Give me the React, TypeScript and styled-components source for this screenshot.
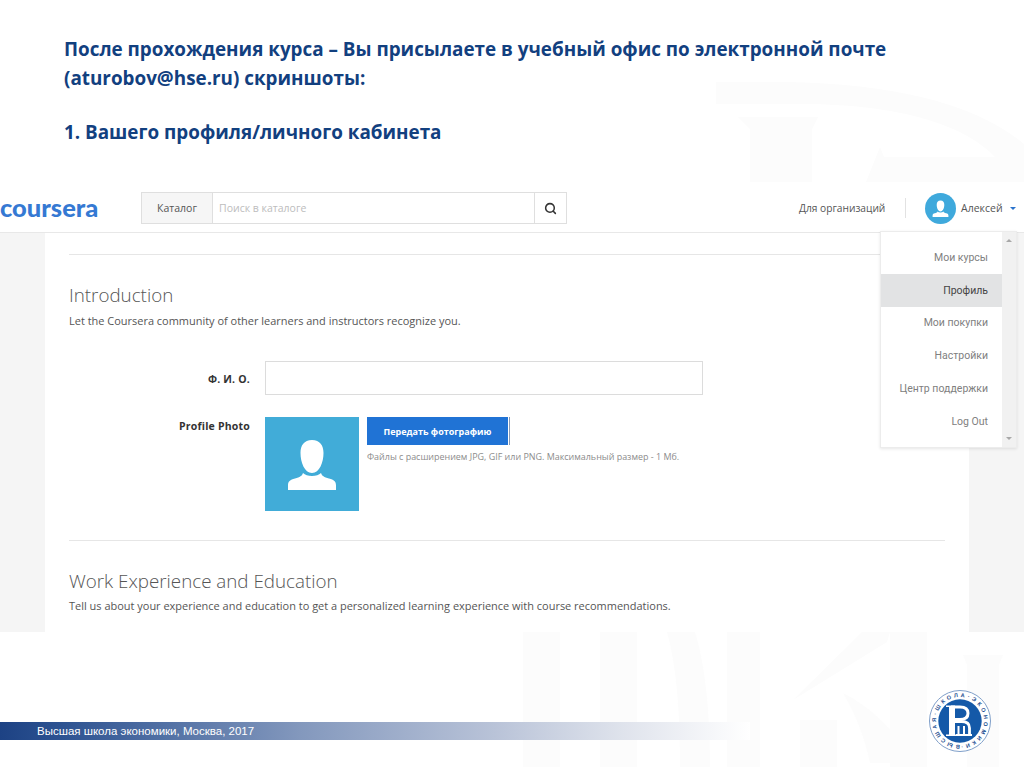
import styled, { createGlobalStyle } from "styled-components"
import { Search } from "lucide-react"

const GlobalStyle = createGlobalStyle`
  html, body {
    margin: 0;
    padding: 0;
    background: #fff;
  }
  * {
    box-sizing: border-box;
  }
`

const Slide = styled.div`
  position: relative;
  width: 1024px;
  height: 767px;
  overflow: hidden;
  display: flex;
  flex-direction: column;
  background: #fff;
  font-family: "Open Sans", "Liberation Sans", sans-serif;
`

const Watermark = styled.svg`
  position: absolute;
  top: 0;
  left: 0;
  width: 1024px;
  height: 767px;
`

const TitleBlock = styled.header`
  position: relative;
  height: 183px;
  padding: 35px 0 0 64px;
  color: #12407f;
  font-size: 18.85px;
  font-weight: 700;
  line-height: 29px;
  white-space: nowrap;
`

const TitleGap = styled.div`
  margin-top: 25px;
`

const Shot = styled.section`
  position: relative;
  height: 449px;
  display: flex;
  flex-direction: column;
  background: #f5f5f5;
`

const TopBar = styled.div`
  height: 50px;
  flex: none;
  display: flex;
  align-items: center;
  padding-top: 1px;
  background: #fff;
  border-bottom: 1px solid #e8e8e8;
`

const Logo = styled.div`
  width: 141px;
  padding-bottom: 3px;
  color: #3579d3;
  font-family: "Lato", sans-serif;
  font-size: 25.5px;
  font-weight: 900;
`

const SearchBox = styled.div`
  width: 426px;
  height: 32px;
  display: flex;
  border: 1px solid #dfdfdf;
  background: #fff;
`

const CatalogTab = styled.div`
  width: 71px;
  display: flex;
  align-items: center;
  justify-content: center;
  background: #f6f6f6;
  border-right: 1px solid #dfdfdf;
  color: #555;
  font-size: 10.5px;
`

const SearchHint = styled.div`
  flex: 1;
  display: flex;
  align-items: center;
  padding-left: 6px;
  color: #bdbdbd;
  font-size: 10.5px;
`

const SearchButton = styled.div`
  width: 32px;
  display: flex;
  align-items: center;
  justify-content: center;
  border-left: 1px solid #dfdfdf;
  color: #333;
`

const TopLink = styled.div`
  margin-left: 232px;
  width: 106px;
  color: #555;
  font-size: 10.2px;
  white-space: nowrap;
`

const Divider = styled.div`
  width: 1px;
  height: 20px;
  background: #e2e2e2;
`

const Avatar = styled.div`
  width: 31px;
  height: 31px;
  margin-left: 19px;
  border-radius: 50%;
  background: #3fa9dc;
  overflow: hidden;
`

const UserName = styled.div`
  margin-left: 5px;
  color: #555;
  font-size: 10.5px;
`

const Caret = styled.div`
  margin-left: 7px;
  width: 0;
  height: 0;
  border-left: 3px solid transparent;
  border-right: 3px solid transparent;
  border-top: 3px solid #2a73cc;
`

const Body = styled.div`
  flex: 1;
  min-height: 0;
  overflow: hidden;
  display: flex;
  padding-left: 45px;
`

const Card = styled.div`
  width: 924px;
  height: 100%;
  padding: 21px 24px 0;
  background: #fff;
`

const Rule = styled.div<{ $top?: number }>`
  height: 1px;
  margin-top: ${(p) => p.$top ?? 0}px;
  background: #e6e6e6;
`

const Heading = styled.h2<{ $top: number }>`
  margin: ${(p) => p.$top}px 0 0;
  color: #555;
  font-size: 18.8px;
  font-weight: 300;
  line-height: 26px;
`

const Lead = styled.p<{ $top: number }>`
  margin: ${(p) => p.$top}px 0 0;
  color: #555;
  font-size: 10.97px;
  line-height: 16px;
  white-space: nowrap;
`

const FormRow = styled.div<{ $top: number }>`
  display: flex;
  gap: 15px;
  margin-top: ${(p) => p.$top}px;
`

const Label = styled.label<{ $center?: boolean }>`
  width: 181px;
  flex: none;
  display: flex;
  justify-content: flex-end;
  align-items: ${(p) => (p.$center ? "center" : "flex-start")};
  padding-top: 2px;
  color: #333;
  font-size: 10.5px;
  font-weight: 700;
  letter-spacing: 0.2px;
`

const NameInput = styled.div`
  width: 438px;
  height: 34px;
  border: 1px solid #dcdcdc;
  background: #fff;
`

const PhotoBox = styled.div`
  width: 94px;
  height: 94px;
  flex: none;
  background: #41acd8;
`

const UploadColumn = styled.div`
  display: flex;
  flex-direction: column;
  margin-left: -7px;
`

const UploadButton = styled.div`
  width: 141px;
  height: 28px;
  display: flex;
  align-items: center;
  justify-content: center;
  background: #2073d5;
  box-shadow: 1px 0 0 #fff, 2px 0 0 #8a9bb5;
  color: #fff;
  font-size: 9px;
  font-weight: 700;
`

const Hint = styled.div`
  margin-top: 6px;
  color: #8c8c8c;
  font-size: 8.95px;
  line-height: 12px;
  white-space: nowrap;
`

const Menu = styled.div`
  position: absolute;
  top: 48px;
  left: 880px;
  width: 137px;
  height: 217px;
  display: flex;
  background: #fff;
  border: 1px solid #ececec;
  box-shadow: 0 1px 3px rgba(0, 0, 0, 0.1);
`

const MenuList = styled.div`
  width: 121px;
  padding-top: 9px;
`

const MenuItem = styled.div<{ $active?: boolean }>`
  height: 32.8px;
  display: flex;
  align-items: center;
  justify-content: flex-end;
  padding-right: 14px;
  background: ${(p) => (p.$active ? "#e2e3e4" : "transparent")};
  color: ${(p) => (p.$active ? "#444" : "#808080")};
  font-family: "Roboto", sans-serif;
  font-size: 10.5px;
`

const ScrollTrack = styled.div`
  flex: 1;
  display: flex;
  flex-direction: column;
  justify-content: space-between;
  align-items: center;
  padding: 7px 0;
  background: #f1f1f1;
`

const ScrollArrow = styled.div<{ $down?: boolean }>`
  width: 0;
  height: 0;
  border-left: 3px solid transparent;
  border-right: 3px solid transparent;
  ${(p) => (p.$down ? "border-top: 3px solid #a8a8a8;" : "border-bottom: 3px solid #a8a8a8;")}
`

const Footer = styled.footer`
  position: relative;
  margin-top: auto;
  height: 75px;
  display: flex;
  align-items: flex-start;
`

const FooterBar = styled.div`
  width: 750px;
  height: 18px;
  margin-top: 30px;
  padding-left: 37px;
  display: flex;
  align-items: center;
  background: linear-gradient(90deg, #1d4284 0%, #2c5291 8%, #8398bd 40%, #b9c3d8 66%, #dfe3ec 83%, #ffffff 100%);
  color: #fff;
  font-family: "Liberation Sans", sans-serif;
  font-size: 11.5px;
`

const Seal = styled.svg`
  width: 62px;
  height: 62px;
  margin: -2px 0 0 179px;
`

function Person({ size }: { size: number }) {
  return (
    <svg width={size} height={size} viewBox="0 0 94 94">
      <path
        fill="#fff"
        d="M47 23c-8 0-11.500 5.500-11.500 13 0 9 4 20 11.500 20s11.500-11 11.500-20c0-7.500-3.500-13-11.500-13zM38 56c-1 3-3 4-8 5.500-5 1.500-7 2.500-7 7V73h48v-4.500c0-4.500-2-5.500-7-7-5-1.500-7-2.500-8-5.500-2 2-5 3-9 3s-7-1-9-3z"
      />
    </svg>
  )
}

export default function App() {
  return (
    <Slide>
      <GlobalStyle />
      <Watermark viewBox="0 0 1024 767">
        <g fill="#fcfcfc">
          <path d="M716 82h70c110 2 190 22 238 62v38h-12c-22-52-100-76-200-78h-96z" />
          <path d="M738 117h80l-6 12v53h-62v-53z" />
          <path d="M880 147l4 10h140v25H866z" />
          <path d="M523 632h37v135h-37zM600 632h37v135h-37zM667 632h28c12 40 15 90 15 135h-30c0-45-2-95-13-135z" />
          <path d="M727 632h33v135h-33zM862 632h28l-3 10-94 58zM890 632h37v135h-37z" />
          <path d="M800 720h37v47h-37zM843 693c30 15 60 45 67 70h-40c-5-25-15-50-27-70zM963 655h40l-4 10v102h-32V665z" />
        </g>
      </Watermark>

      <TitleBlock>
        <div>После прохождения курса – Вы присылаете в учебный офис по электронной почте</div>
        <div>(aturobov@hse.ru) скриншоты:</div>
        <TitleGap>1. Вашего профиля/личного кабинета</TitleGap>
      </TitleBlock>

      <Shot>
        <TopBar>
          <Logo>coursera</Logo>
          <SearchBox>
            <CatalogTab>Каталог</CatalogTab>
            <SearchHint>Поиск в каталоге</SearchHint>
            <SearchButton>
              <Search size={13} strokeWidth={2.8} />
            </SearchButton>
          </SearchBox>
          <TopLink>Для организаций</TopLink>
          <Divider />
          <Avatar>
            <Person size={31} />
          </Avatar>
          <UserName>Алексей</UserName>
          <Caret />
        </TopBar>

        <Body>
          <Card>
            <Rule />
            <Heading $top={27}>Introduction</Heading>
            <Lead $top={5}>Let the Coursera community of other learners and instructors recognize you.</Lead>
            <FormRow $top={32}>
              <Label $center>Ф. И. О.</Label>
              <NameInput />
            </FormRow>
            <FormRow $top={22}>
              <Label>Profile Photo</Label>
              <PhotoBox>
                <Person size={94} />
              </PhotoBox>
              <UploadColumn>
                <UploadButton>Передать фотографию</UploadButton>
                <Hint>Файлы с расширением JPG, GIF или PNG. Максимальный размер - 1 Мб.</Hint>
              </UploadColumn>
            </FormRow>
            <Rule $top={29} />
            <Heading $top={27}>Work Experience and Education</Heading>
            <Lead $top={4}>
              Tell us about your experience and education to get a personalized learning experience with course
              recommendations.
            </Lead>
          </Card>
        </Body>

        <Menu>
          <MenuList>
            <MenuItem>Мои курсы</MenuItem>
            <MenuItem $active>Профиль</MenuItem>
            <MenuItem>Мои покупки</MenuItem>
            <MenuItem>Настройки</MenuItem>
            <MenuItem>Центр поддержки</MenuItem>
            <MenuItem>Log Out</MenuItem>
          </MenuList>
          <ScrollTrack>
            <ScrollArrow />
            <ScrollArrow $down />
          </ScrollTrack>
        </Menu>
      </Shot>

      <Footer>
        <FooterBar>Высшая школа экономики, Москва, 2017</FooterBar>
        <Seal viewBox="0 0 62 62">
          <defs>
            <path id="sealRing" d="M31 55a24 24 0 1 1 0-48a24 24 0 1 1 0 48" />
          </defs>
          <circle cx="31" cy="31" r="30.500" fill="#fff" stroke="#7f9fc9" strokeWidth="1" />
          <circle cx="31" cy="31" r="21.700" fill="#1459a8" />
          <text fontFamily="Liberation Sans, sans-serif" fontSize="5.600" fontWeight="700" fill="#1d4f92">
            <textPath href="#sealRing" textLength="149" lengthAdjust="spacing">
              ВЫСШАЯ·ШКОЛА·ЭКОНОМИКИ·
            </textPath>
          </text>
          <g fill="none" stroke="#fff">
            <path strokeWidth="3" d="M22 17H31C36.500 17 39 19.500 39 23.200S36.500 29.500 31 29.500H24" />
            <path strokeWidth="2.800" d="M25 31.500H32.500C38 31.500 40.500 34 40.500 38V45" />
            <path strokeWidth="2" d="M29.500 36V45M35 36V45M27 45H43" />
          </g>
          <path fill="#fff" d="M17 15.500h9v29h2V46H17v-1.500h3V17h-3z" />
        </Seal>
      </Footer>
    </Slide>
  )
}
